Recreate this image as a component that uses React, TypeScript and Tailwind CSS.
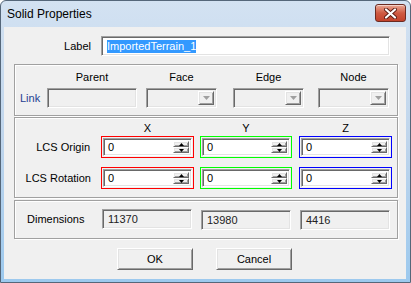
import React from 'react';

const sunken =
  'border border-t-[#a0a0a0] border-l-[#a0a0a0] border-r-white border-b-white shadow-[inset_1px_1px_0_#696969,inset_-1px_-1px_0_#e3e3e3]';
const raised =
  'border border-t-white border-l-white border-r-[#696969] border-b-[#696969] shadow-[inset_1px_1px_0_#e3e3e3,inset_-1px_-1px_0_#a0a0a0]';
const etched = 'border border-[#a0a0a0] shadow-[inset_1px_1px_0_#fff,1px_1px_0_#fff]';

function Arrow({ dir, color, w = 5, h = 3 }: { dir: 'up' | 'down'; color: string; w?: number; h?: number }) {
  const pts = dir === 'up' ? `${w / 2},0 ${w},${h} 0,${h}` : `0,0 ${w},0 ${w / 2},${h}`;
  return (
    <svg width={w} height={h} viewBox={`0 0 ${w} ${h}`}>
      <polygon points={pts} fill={color} />
    </svg>
  );
}

function Combo() {
  return (
    <div className={`w-[71px] h-[20px] bg-[#f0f0f0] p-[2px] flex justify-end ${sunken}`}>
      <div className={`w-[16px] h-full flex items-center justify-center bg-[#f0f0f0] ${raised}`}>
        <Arrow dir="down" color="#a0a0a0" w={7} h={4} />
      </div>
    </div>
  );
}

function Spin({ color, w }: { color: string; w: string }) {
  return (
    <div className={`${w} h-[22px] border p-[1px] bg-[#f0f0f0] ${color}`}>
      <div className={`h-full bg-white p-[2px] flex items-center ${sunken}`}>
        <span className="flex-1 pl-[2px] text-black">0</span>
        <div className="w-[16px] h-full flex flex-col">
          <div className={`h-[8px] flex items-center justify-center bg-[#f0f0f0] ${raised}`}>
            <Arrow dir="up" color="#000" />
          </div>
          <div className={`h-[8px] flex items-center justify-center bg-[#f0f0f0] ${raised}`}>
            <Arrow dir="down" color="#000" />
          </div>
        </div>
      </div>
    </div>
  );
}

function ReadField({ value }: { value: string }) {
  return (
    <div className={`w-[90px] h-[20px] bg-[#f0f0f0] pl-[5px] flex items-center text-[#222] ${sunken}`}>
      {value}
    </div>
  );
}

export default function App() {
  return (
    <div className="w-[411px] h-[283px] flex flex-col border border-[#55677a] rounded-t-[6px] bg-gradient-to-b from-[#d3e2f2] via-[#bfd5ec] to-[#9cc9ee] font-['Liberation_Sans',Arial,sans-serif] text-[11px] text-black overflow-hidden">
      {/* Title bar */}
      <div className="h-[26px] flex items-start justify-between pl-[6px] pr-[4px]">
        <span className="text-[12px] leading-[26px] text-black">Solid Properties</span>
        <div className="mt-[3px] w-[31px] h-[18px] rounded-[3px] border border-[#6b2b22] bg-gradient-to-b from-[#e9a896] via-[#cf5a42] to-[#c2422b] shadow-[inset_0_1px_0_rgba(255,255,255,0.5)] flex items-center justify-center">
          <svg width="13" height="11" viewBox="0 0 13 11">
            <path d="M2 1.5 L11 9.5 M11 1.5 L2 9.5" stroke="#5a1c14" strokeWidth="4" strokeLinecap="round" />
            <path d="M2 1.5 L11 9.5 M11 1.5 L2 9.5" stroke="#fff" strokeWidth="2.2" strokeLinecap="round" />
          </svg>
        </div>
      </div>

      {/* Client area */}
      <div className="flex-1 ml-[3px] mr-[4px] mb-[3px] bg-[#f0f0f0] flex flex-col">
        <div className="pt-[9px] flex items-center">
          <span className="w-[87px] text-right">Label</span>
          <div className={`ml-[10px] w-[289px] h-[20px] bg-white pl-[5px] flex items-center ${sunken}`}>
            <span className="bg-[#3399ff] text-white leading-[13px]">ImportedTerrain_1</span>
          </div>
        </div>

        {/* Link group */}
        <div className={`ml-[10px] mt-[8px] w-[384px] h-[52px] pt-[5px] flex flex-col ${etched}`}>
          <div className="h-[14px] flex items-center">
            <span className="w-[32px]" />
            <span className="w-[90px] text-center">Parent</span>
            <span className="ml-[9px] w-[71px] text-center">Face</span>
            <span className="ml-[16px] w-[71px] text-center">Edge</span>
            <span className="ml-[14px] w-[71px] text-center">Node</span>
          </div>
          <div className="mt-[4px] flex items-center">
            <span className="w-[32px] pl-[5px] text-[#1f3f92]">Link</span>
            <div className={`w-[90px] h-[20px] bg-[#f0f0f0] ${sunken}`} />
            <div className="ml-[9px]"><Combo /></div>
            <div className="ml-[16px]"><Combo /></div>
            <div className="ml-[14px]"><Combo /></div>
          </div>
        </div>

        {/* LCS group */}
        <div className={`ml-[10px] mt-[1px] w-[384px] h-[81px] pt-[3px] flex flex-col ${etched}`}>
          <div className="h-[14px] flex items-center">
            <span className="w-[86px]" />
            <span className="w-[93px] text-center">X</span>
            <span className="ml-[6px] w-[92px] text-center">Y</span>
            <span className="ml-[7px] w-[93px] text-center">Z</span>
          </div>
          <div className="mt-[1px] flex items-center">
            <span className="w-[86px] pr-[11px] text-right">LCS Origin</span>
            <Spin color="border-[#ff0000]" w="w-[93px]" />
            <div className="ml-[6px]"><Spin color="border-[#00ff00]" w="w-[92px]" /></div>
            <div className="ml-[7px]"><Spin color="border-[#0000ff]" w="w-[93px]" /></div>
          </div>
          <div className="mt-[9px] flex items-center">
            <span className="w-[86px] pr-[10px] text-right">LCS Rotation</span>
            <Spin color="border-[#ff0000]" w="w-[93px]" />
            <div className="ml-[6px]"><Spin color="border-[#00ff00]" w="w-[92px]" /></div>
            <div className="ml-[7px]"><Spin color="border-[#0000ff]" w="w-[93px]" /></div>
          </div>
        </div>

        {/* Dimensions group */}
        <div className={`ml-[10px] mt-[2px] w-[384px] h-[39px] pt-[8px] flex items-start ${etched}`}>
          <span className="w-[87px] h-[20px] pl-[12px] flex items-center">Dimensions</span>
          <ReadField value="11370" />
          <div className="ml-[9px] mt-[1px]"><ReadField value="13980" /></div>
          <div className="ml-[9px] mt-[1px]"><ReadField value="4416" /></div>
        </div>

        {/* Buttons */}
        <div className="mt-[9px] pl-[113px] flex gap-[23px]">
          <button className={`w-[76px] h-[22px] bg-[#f0f0f0] text-black ${raised}`}>OK</button>
          <button className={`w-[76px] h-[22px] bg-[#f0f0f0] text-black ${raised}`}>Cancel</button>
        </div>
      </div>
    </div>
  );
}
